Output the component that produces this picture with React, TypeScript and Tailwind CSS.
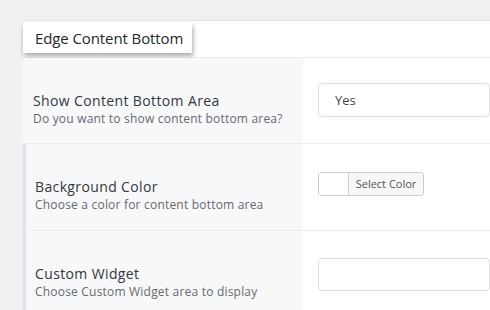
import React from "react";

const font = { fontFamily: '"Open Sans", "Noto Sans", Arial, sans-serif' };

export default function App() {
  return (
    <div className="w-[490px] h-[310px] overflow-hidden bg-[#f1f1f1]" style={font}>
      <div className="h-[20px] bg-[#f0f0f0]" />
      <div className="ml-[23px] bg-white border-t border-[#e2e2e2]">
        <div className="h-[37px] border-b border-[#ececec] pt-[2px]">
          <div className="w-[169px] h-[30px] bg-white shadow-[1px_3px_5px_rgba(0,0,0,0.35)] pl-[12px] text-[15px] tracking-[-0.1px] leading-[30px] text-[#23282d]">
            Edge Content Bottom
          </div>
        </div>
        <div className="flex h-[86px] border-b border-[#ececec]">
          <div className="w-[280px] bg-[#f7f8fa] pl-[10px] pt-[34px]">
            <div className="text-[14px] tracking-[0.37px] leading-[18px] text-[#32373c]">Show Content Bottom Area</div>
            <div className="text-[12px] tracking-[0.2px] leading-[18px] text-[#666a70]">Do you want to show content bottom area?</div>
          </div>
          <div className="flex-1 pt-[25px] pl-[15px]">
            <div className="h-[34px] border border-[#dddddd] rounded-[4px] pl-[16px] text-[13px] leading-[32px] text-[#444]">
              Yes
            </div>
          </div>
        </div>
        <div className="flex h-[87px] border-b border-[#ececec] border-l-[3px] border-l-[#e1e1f0]">
          <div className="w-[277px] bg-[#f7f8fa] pl-[9px] pt-[34px]">
            <div className="text-[14px] tracking-[0.37px] leading-[18px] text-[#32373c]">Background Color</div>
            <div className="text-[12px] tracking-[0.2px] leading-[18px] text-[#666a70]">Choose a color for content bottom area</div>
          </div>
          <div className="flex-1 pt-[28px] pl-[15px]">
            <div className="flex w-[106px] h-[24px] border border-[#cccccc] rounded-[3px] overflow-hidden">
              <div className="w-[30px] bg-white border-r border-[#cccccc]" />
              <div className="flex-1 bg-[#f7f7f7] text-[11px] leading-[22px] text-[#555] text-center">Select Color</div>
            </div>
          </div>
        </div>
        <div className="flex h-[100px] border-l-[3px] border-l-[#e1e1f0]">
          <div className="w-[277px] bg-[#f7f8fa] pl-[9px] pt-[34px]">
            <div className="text-[14px] tracking-[0.37px] leading-[18px] text-[#32373c]">Custom Widget</div>
            <div className="text-[12px] tracking-[0.2px] leading-[18px] text-[#666a70]">Choose Custom Widget area to display</div>
          </div>
          <div className="flex-1 pt-[27px] pl-[15px]">
            <div className="h-[33px] border border-[#dddddd] rounded-[4px]" />
          </div>
        </div>
      </div>
    </div>
  );
}
